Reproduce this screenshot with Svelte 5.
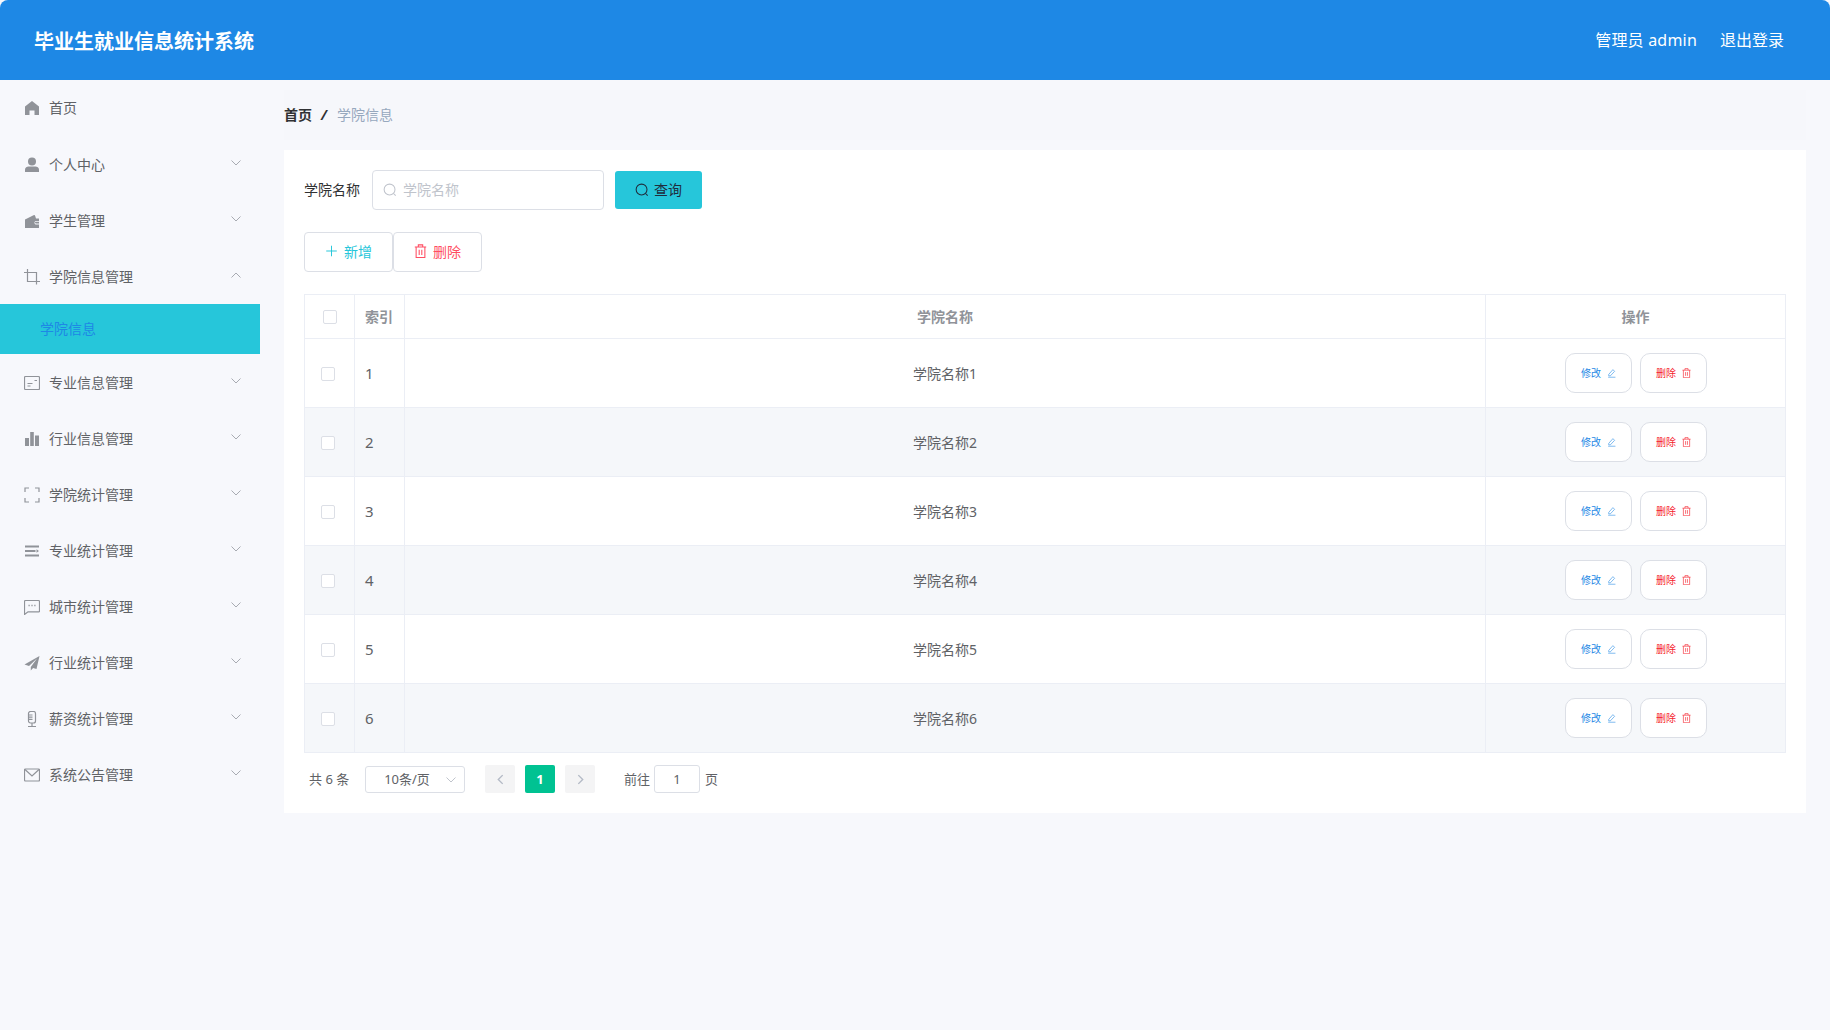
<script>
  const menu = [
    { label: '首页', icon: 'home', noArrow: true },
    { label: '个人中心', icon: 'user' },
    { label: '学生管理', icon: 'wallet' },
    { label: '学院信息管理', icon: 'crop', open: true, children: ['学院信息'] },
    { label: '专业信息管理', icon: 'card' },
    { label: '行业信息管理', icon: 'bars' },
    { label: '学院统计管理', icon: 'full' },
    { label: '专业统计管理', icon: 'fold' },
    { label: '城市统计管理', icon: 'chat' },
    { label: '行业统计管理', icon: 'send' },
    { label: '薪资统计管理', icon: 'mic' },
    { label: '系统公告管理', icon: 'mail' }
  ];
  const rows = [1, 2, 3, 4, 5, 6];
</script>

{#snippet chevron(up)}
  <svg class="chev" viewBox="0 0 10 6" width="10" height="6">
    {#if up}<path d="M.5 5.500 5 1l4.500 4.500" />{:else}<path d="M.5.5 5 5 9.500.5" />{/if}
  </svg>
{/snippet}

{#snippet trash()}
  <svg viewBox="0 0 14 16" class="line"><path d="M.5 3.500h13M4.500 3.500V1h5v2.500M2 3.500v12h10v-12M5.500 6.500v6M8.500 6.500v6" /></svg>
{/snippet}

{#snippet lens()}
  <svg viewBox="0 0 16 16" class="line"><circle cx="7.500" cy="7.500" r="6.200" /><path d="m12 12 2.500 2.500" /></svg>
{/snippet}

{#snippet icon(name)}
  <svg class="mi" viewBox="0 0 16 16" width="16" height="16">
    {#if name === 'home'}
      <path class="f" d="M8 1 15 6.500V15h-4.500v-4.500h-5V15H1V6.500z" />
    {:else if name === 'user'}
      <circle class="f" cx="8" cy="4.600" r="4" /><path class="f" d="M1 15v-2.500C1 10.500 3 9.500 4.500 9.500h7c1.500 0 3.500 1 3.500 3V15z" />
    {:else if name === 'wallet'}
      <path class="f" d="M1 6.500 9.500 2.300q1.300-.6 1.700.7L12 5.500H15V8h-3.500a2 2 0 0 0 0 3.500H15V15H1zM11.800 8.800h3.200v1.600h-3.200a.8.8 0 0 1 0-1.600z" />
    {:else if name === 'crop'}
      <path class="s" d="M3.500 0v12.500H16M0 3.500h12.500V15.500" />
    {:else if name === 'card'}
      <rect class="s" x=".5" y="1.500" width="15" height="13" rx="1" /><path class="s" d="M3.500 8.500h5M3.500 11h3M10.500 5.500h2.500" />
    {:else if name === 'bars'}
      <path class="f" d="M1 7h4v8H1zM6.200 1h3.600v14H6.200zM11 4.500h4V15h-4z" />
    {:else if name === 'full'}
      <path class="s" d="M5 1H1v4M11 1h4v4M5 15H1v-4M11 15h4v-4" />
    {:else if name === 'fold'}
      <path class="f" d="M1 2.500h14v2H1zM1 7h10.500v2H1zM1 11.500h14v2H1zM12.500 6.300 15 8l-2.500 1.700z" />
    {:else if name === 'chat'}
      <path class="s" d="M1.500 1.500h13a1 1 0 0 1 1 1V12a.8.8 0 0 1-.8.8H4l-3.500 2.700V2.500a1 1 0 0 1 1-1z" /><path class="d" d="M4.500 6.500h1.200M7.400 6.500h1.200M10.300 6.500h1.200" />
    {:else if name === 'send'}
      <path class="f" d="M15.500 1 .5 9.500 5 11l8-7.500-6.200 8.500v3.500l2.300-2.600 3.400 1.100z" />
    {:else if name === 'mic'}
      <rect class="s" x="4.500" y=".5" width="7" height="11.500" rx="2" /><path class="s" d="M5 4h3.500M5 6.200h3.500M5 8.400h3.500M8 12v3M4 15.500h8" />
    {:else if name === 'mail'}
      <rect class="s" x=".5" y="2" width="15" height="12" rx="1" /><path class="s" d="m1 2.500 7 6.500 7-6.500" />
    {/if}
  </svg>
{/snippet}

<div class="page">
  <header class="top">
    <div class="title">毕业生就业信息统计系统</div>
    <div class="user">
      <span class="who">管理员 admin</span>
      <span>退出登录</span>
    </div>
  </header>

  <div class="body">
    <aside class="side">
      <nav>
        {#each menu as item}
          <div class="item" class:first={item.noArrow}>
            {@render icon(item.icon)}
            <span class="lbl">{item.label}</span>
            {#if !item.noArrow}{@render chevron(item.open)}{/if}
          </div>
          {#if item.children}
            {#each item.children as c}
              <div class="sub">{c}</div>
            {/each}
          {/if}
        {/each}
      </nav>
    </aside>

    <main class="main">
      <div class="crumb">
        <b>首页</b><i>/</i><span>学院信息</span>
      </div>
      <section class="card">
        <div class="search">
          <span class="slabel">学院名称</span>
          <div class="input">
            <span class="ico">{@render lens()}</span>
            <span>学院名称</span>
          </div>
          <button class="query"><span class="ico">{@render lens()}</span>查询</button>
        </div>
        <div class="tools">
          <button class="tool add">
            <svg viewBox="0 0 16 16" class="line ico12"><path d="M8 1.500v13M1.500 8h13" /></svg>新增
          </button>
          <button class="tool del"><span class="ico12">{@render trash()}</span>删除</button>
        </div>
        <table>
          <colgroup><col class="c1" /><col class="c2" /><col /><col class="c4" /></colgroup>
          <thead>
            <tr>
              <th class="chk"><span class="box"></span></th>
              <th class="idx">索引</th>
              <th>学院名称</th>
              <th>操作</th>
            </tr>
          </thead>
          <tbody>
            {#each rows as n}
              <tr>
                <td class="chk"><span class="box off"></span></td>
                <td class="idx num">{n}</td>
                <td>学院名称{n}</td>
                <td>
                  <div class="acts">
                    <button class="act edit">修改
                      <svg viewBox="0 0 16 16" class="line"><path d="M3 10.500 10.500 2 13.500 5 6 13H3zM2 15.500h13" /></svg>
                    </button>
                    <button class="act rm">删除 {@render trash()}</button>
                  </div>
                </td>
              </tr>
            {/each}
          </tbody>
        </table>
        <div class="pager">
          <span class="total">共 6 条</span>
          <div class="size"><span>10条/页</span> {@render chevron(false)}</div>
          <span class="pg nav"><svg viewBox="0 0 8 12" width="7" height="11"><path d="M6.500 1 1.500 6l5 5" /></svg></span>
          <span class="pg cur">1</span>
          <span class="pg nav"><svg viewBox="0 0 8 12" width="7" height="11"><path d="M1.500 1l5 5-5 5" /></svg></span>
          <span class="goto">前往</span>
          <span class="jump">1</span>
          <span class="unit">页</span>
        </div>
      </section>
    </main>
  </div>
</div>

<style>
  :global(body) {
    margin: 0;
    background: #f7f8fc;
    font-family: "Noto Sans", "Noto Sans CJK SC", sans-serif;
  }
  .page { width: 1830px; height: 1030px; overflow: hidden; position: relative; }

  .top {
    height: 80px;
    background: #1e88e5;
    border-radius: 8px 8px 0 0;
    display: flex;
    align-items: center;
    justify-content: space-between;
    padding: 0 46px 0 34px;
    color: #fff;
  }
  .title { font-size: 20px; font-weight: 700; line-height: 1; padding-top: 4px; }
  .user { display: flex; gap: 23px; font-size: 16px; line-height: 1; }
  .who { letter-spacing: .2px; }

  .body { display: flex; }
  .side { width: 260px; flex: none; }
  .item {
    height: 56px;
    display: flex;
    align-items: center;
    padding-left: 24px;
    color: #606266;
    font-size: 14px;
    position: relative;
  }
  .item.first { margin-bottom: 1px; }
  .lbl { margin-left: 9px; line-height: 1; }
  .mi { flex: none; }
  .mi .f { fill: #909399; }
  .mi .s { fill: none; stroke: #909399; stroke-width: 1.200; }
  .mi .d { fill: none; stroke: #909399; stroke-width: 1.400; }
  .chev { fill: none; stroke: #a8abb2; stroke-width: 1; flex: none; }
  .item .chev { position: absolute; right: 19px; top: 23px; }
  .sub {
    height: 50px;
    margin: -1px 0 1px;
    background: #26c6da;
    color: #1e88e5;
    font-size: 14px;
    line-height: 50px;
    padding-left: 40px;
  }

  .main { flex: 1; padding: 10px 24px 0; min-width: 0; }
  .crumb {
    height: 50px;
    box-sizing: border-box;
    padding-bottom: 2px;
    background: #f6f7fb;
    display: flex;
    align-items: center;
    font-size: 14px;
    margin-bottom: 10px;
    color: #97a8be;
  }
  .crumb b { color: #303133; font-weight: 700; }
  .crumb i { color: #303133; font-weight: 700; margin: 0 10px 0 9px; font-style: italic; }

  .card { background: #fff; padding: 20px; height: 663px; box-sizing: border-box; }
  .search { display: flex; align-items: center; height: 40px; font-size: 14px; }
  .slabel { color: #303133; width: 68px; flex: none; padding-bottom: 2px; }
  .input {
    width: 232px;
    height: 40px;
    box-sizing: border-box;
    border: 1px solid #dcdfe6;
    border-radius: 4px;
    display: flex;
    align-items: center;
    padding: 0 0 2px 10px;
    color: #c0c4cc;
    gap: 6px;
  }
  .input .ico { margin-top: 1px; }
  .ico { width: 14px; height: 14px; display: inline-flex; }
  .line { fill: none; stroke: currentColor; stroke-width: 1.200; width: 100%; height: 100%; }
  .query {
    margin-left: 11px;
    width: 87px;
    height: 38px;
    border: 0;
    border-radius: 3px;
    background: #26c6da;
    color: #1f2d3d;
    font: inherit;
    display: flex;
    align-items: center;
    justify-content: center;
    gap: 5px;
    padding: 0 0 2px;
  }
  .query .ico { margin-top: 1px; }
  .tools { display: flex; margin-top: 22px; }
  .tool {
    width: 89px;
    height: 40px;
    box-sizing: border-box;
    border: 1px solid #dcdfe6;
    border-radius: 4px;
    background: #fff;
    font: inherit;
    font-size: 14px;
    display: flex;
    align-items: center;
    justify-content: center;
    gap: 6px;
    padding: 0 0 2px;
  }
  .ico12 { width: 13px; height: 14px; display: inline-flex; flex: none; }
  .add { color: #26c6da; }
  .del { color: #ff4d62; }

  table {
    margin-top: 22px;
    width: 1482px;
    border-collapse: collapse;
    table-layout: fixed;
    font-size: 14px;
    color: #606266;
  }
  .c1, .c2 { width: 50px; }
  .c4 { width: 300px; }
  th, td { border: 1px solid #ebeef5; text-align: center; padding: 0; }
  th { height: 44px; color: #909399; font-weight: 700; padding-bottom: 1px; box-sizing: border-box; }
  th.chk { padding-bottom: 0; }
  td { height: 68px; }
  td.chk { height: 66px; padding-top: 2px; }
  tbody tr:nth-child(even) td { background: #f5f7fa; }
  .idx { text-align: left; padding-left: 10px; }
  .num { font-size: 15px; }
  .chk { line-height: 0; }
  .box {
    display: inline-block;
    box-sizing: border-box;
    width: 14px;
    height: 14px;
    border: 1px solid #dcdfe6;
    border-radius: 2px;
    background: #fff;
    vertical-align: middle;
  }
  .box.off { margin-right: 4px; }
  .acts { display: flex; justify-content: center; gap: 8px; padding-left: 1px; }
  .act {
    width: 67px;
    height: 40px;
    box-sizing: border-box;
    border: 1px solid #dcdfe6;
    border-radius: 10px;
    background: #fff;
    font: inherit;
    font-size: 10px;
    display: inline-flex;
    align-items: center;
    justify-content: center;
    gap: 6px;
    padding: 0 0 1px;
  }
  .act svg { width: 9px; height: 10px; flex: none; stroke-width: 1; }
  .edit { color: #1e88e5; }
  .rm { color: #f5222d; }

  .pager {
    display: flex;
    align-items: center;
    height: 28px;
    margin-top: 12px;
    font-size: 13px;
    color: #606266;
    padding-left: 5px;
  }
  .total { width: 56px; flex: none; padding-bottom: 2px; }
  .size {
    width: 100px;
    height: 27px;
    align-self: flex-end;
    box-sizing: border-box;
    border: 1px solid #dcdfe6;
    border-radius: 3px;
    display: flex;
    align-items: center;
    justify-content: center;
    padding: 0 16px 2px 0;
    position: relative;
  }
  .size .chev { position: absolute; right: 8px; top: 10px; stroke: #c0c4cc; }
  .pg {
    width: 30px;
    height: 28px;
    border-radius: 2px;
    display: flex;
    align-items: center;
    justify-content: center;
    margin-left: 10px;
  }
  .pg.nav { background: #f4f4f5; }
  .pg.nav svg { fill: none; stroke: #b4bac6; stroke-width: 1.600; }
  .size + .pg { margin-left: 20px; }
  .pg.cur { background: #00c292; color: #fff; font-weight: 700; }
  .goto { margin-left: 29px; width: 30px; flex: none; padding-bottom: 2px; }
  .jump {
    width: 46px;
    height: 28px;
    box-sizing: border-box;
    border: 1px solid #dcdfe6;
    border-radius: 3px;
    display: flex;
    align-items: center;
    justify-content: center;
    padding-bottom: 1px;
  }
  .unit { margin-left: 5px; padding-bottom: 2px; }
</style>
